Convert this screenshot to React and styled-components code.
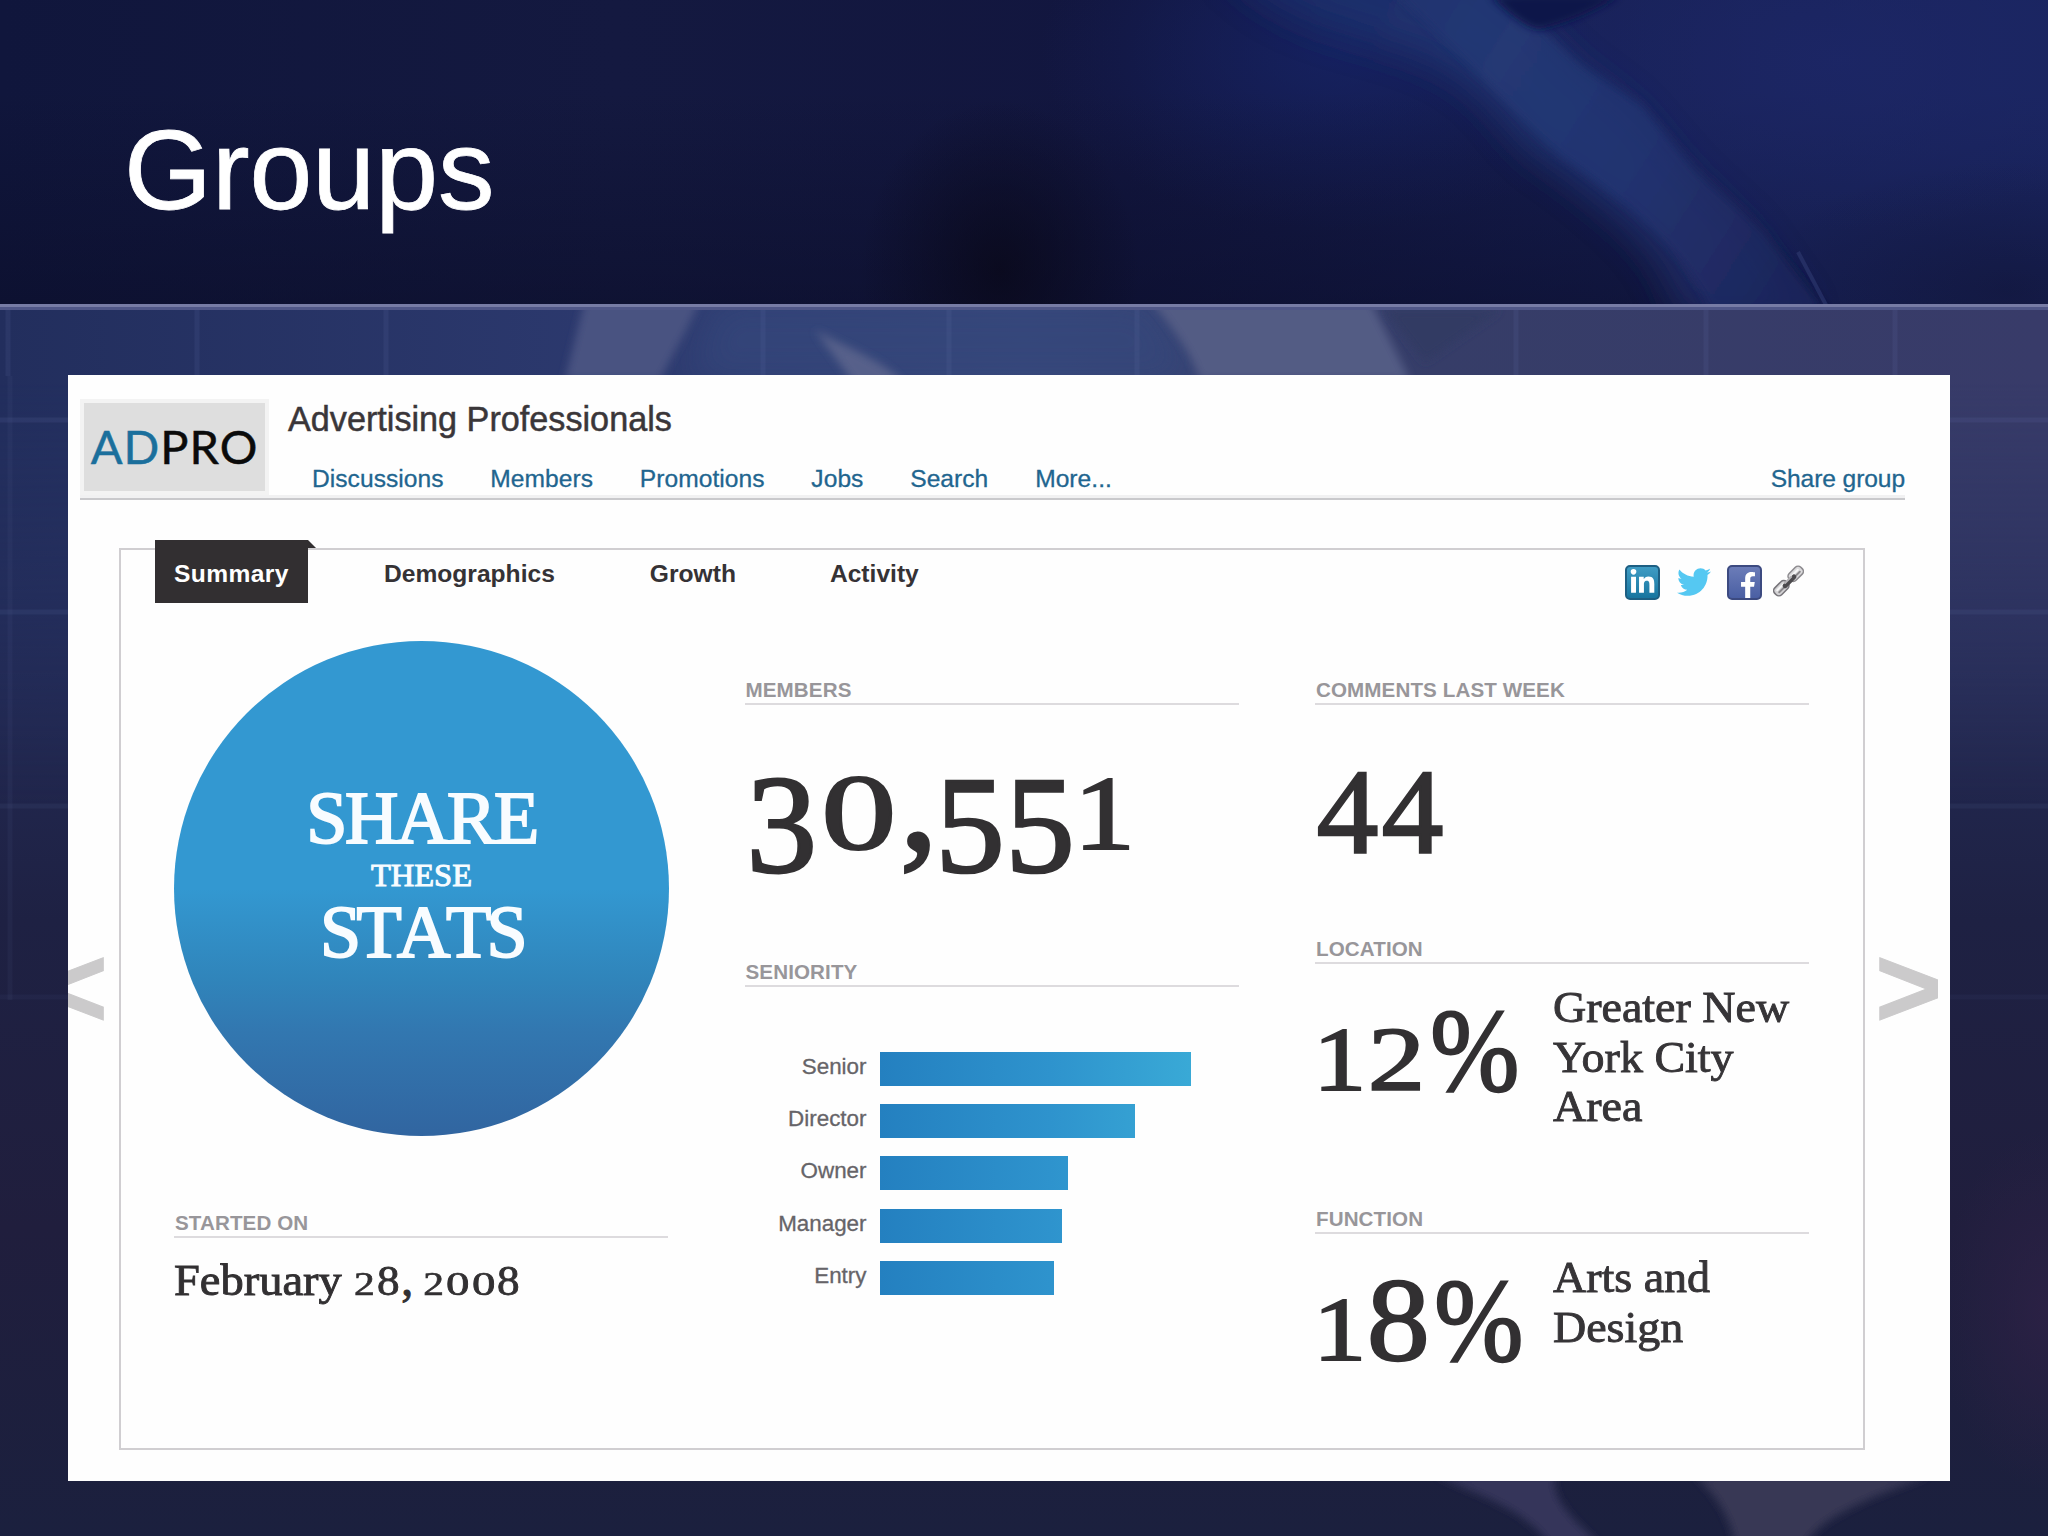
import React from 'react';
import styled, { createGlobalStyle } from 'styled-components';
import { FaFacebookF, FaLinkedinIn, FaTwitter } from 'react-icons/fa';

const sans = '"Liberation Sans", Arial, sans-serif';
const serif = '"Liberation Serif", Georgia, serif';

const GlobalStyle = createGlobalStyle`
    * {
        box-sizing: border-box;
    }
    body {
        margin: 0;
        font-family: ${sans};
    }
`;

const Slide = styled.div`
    position: relative;
    width: 2048px;
    height: 1536px;
    overflow: hidden;
    background-color: #1c2040;
`;

const Backdrop = styled.svg`
    position: absolute;
    top: 0;
    left: 0;
`;

const SlideContent = styled.div`
    position: relative;
    display: flex;
    flex-direction: column;
`;

const SlideHeader = styled.header`
    height: 375px;
    padding: 101px 0 0 124px;
`;

const Title = styled.h1`
    margin: 0;
    font-size: 113px;
    line-height: 138px;
    font-weight: 400;
    color: white;
    -webkit-text-stroke: 0.8px white;
`;

const Card = styled.main`
    width: 1882px;
    height: 1106px;
    margin-left: 68px;
    padding-top: 24px;
    overflow: hidden;
    background-color: #fefefe;
`;

const GroupHeader = styled.div`
    display: flex;
    width: 1825px;
    height: 101px;
    margin-left: 12px;
    border-bottom: 2px solid #c9c9cc;
    box-shadow: inset 0 -3px 0 #f1f1f2;
`;

const Logo = styled.div`
    width: 189px;
    height: 96px;
    display: flex;
    align-items: center;
    justify-content: center;
    padding-bottom: 2px;
    border: 4px solid #f3f3f3;
    background-color: #dedede;
    font-family: Lato, sans-serif;
    font-size: 47px;
    letter-spacing: 1px;
    color: #0b0b0b;
    -webkit-text-stroke: 0.5px currentColor;
`;

const LogoAccent = styled.span`
    color: #1b6f9c;
`;

const GroupInfo = styled.div`
    flex: 1;
    margin-left: 19px;
`;

const GroupName = styled.h2`
    margin: 0;
    font-size: 34.2px;
    line-height: 40px;
    font-weight: 400;
    color: #3a3639;
    -webkit-text-stroke: 0.5px #3a3639;
`;

const Nav = styled.nav`
    display: flex;
    gap: 46.8px;
    margin-top: 25px;
    padding-left: 24px;
`;

const NavLink = styled.a`
    font-size: 24.6px;
    line-height: 30px;
    letter-spacing: ${(props) => (props.$right ? '-0.1' : '0.03')}px;
    color: #21658f;
    margin-left: ${(props) => (props.$right ? 'auto' : '0')};
    -webkit-text-stroke: 0.3px #21658f;
`;

const Stage = styled.div`
    display: grid;
    grid-template-columns: 51px 1746px 85px;
    margin-top: 48px;
`;

const Arrow = styled.div`
    display: flex;
    justify-content: ${(props) => (props.$side === 'left' ? 'flex-end' : 'flex-start')};
    padding: ${(props) => (props.$side === 'left' ? '379px 11px 0 0' : '379px 0 0 10px')};
    overflow: hidden;
    font-size: 115px;
    line-height: 120px;
    font-weight: 700;
    color: #cbcacb;
    -webkit-text-stroke: 1px #cbcacb;
`;

const Panel = styled.section`
    height: 902px;
    border: 2px solid #d0ced1;
`;

const TabBar = styled.div`
    display: flex;
    height: 63px;
    margin-top: -10px;
    padding: 0 59px 0 34px;
`;

const Tab = styled.div`
    height: 63px;
    padding-top: 5px;
    font-size: 24.6px;
    line-height: 58px;
    font-weight: 700;
    color: #353235;
    margin-left: ${(props) => props.$gap}px;
`;

const ActiveTab = styled(Tab)`
    position: relative;
    width: 153px;
    padding-left: 19px;
    letter-spacing: 0.4px;
    background-color: #322f31;
    color: white;
    &::after {
        content: "";
        position: absolute;
        top: 0;
        left: 100%;
        border-bottom: 8px solid #322f31;
        border-right: 8px solid transparent;
    }
`;

const ShareIcons = styled.div`
    display: flex;
    align-items: flex-start;
    margin: 25px 0 0 auto;
`;

const Badge = styled.div`
    width: 35px;
    height: 35px;
    display: flex;
    align-items: center;
    justify-content: center;
    border: 2px solid ${(props) => props.$edge};
    border-radius: 5px;
    background: ${(props) => props.$fill};
    color: white;
    overflow: hidden;
`;

const LinkedInBadge = styled(Badge)`
    margin-right: 17px;
`;

const FacebookBadge = styled(Badge)`
    align-items: flex-end;
    padding-left: 7px;
    margin: 0 11px 0 16px;
`;

const Columns = styled.div`
    display: grid;
    grid-template-columns: 494px 494px 494px;
    column-gap: 76.5px;
    padding-left: 53px;
`;

const Column = styled.div`
    display: flex;
    flex-direction: column;
    padding-top: ${(props) => props.$top}px;
`;

const Section = styled.div`
    height: ${(props) => props.$height}px;
`;

const Label = styled.div`
    height: 26px;
    padding-left: 1px;
    border-bottom: 2px solid #dddbde;
    font-size: 20.6px;
    line-height: 22px;
    letter-spacing: 0.1px;
    font-weight: 700;
    color: #98969a;
`;

const Circle = styled.div`
    width: 495px;
    height: 495px;
    display: flex;
    flex-direction: column;
    align-items: center;
    padding-top: 137px;
    margin-bottom: 76px;
    border-radius: 50%;
    background: linear-gradient(#3398d1 0%, #3398d1 50%, #3085bb 68%, #3277b0 79%, #3165a0 100%);
    font-family: ${serif};
    color: #f8fcff;
`;

const CircleBig = styled.span`
    font-size: 74px;
    line-height: 80px;
    letter-spacing: ${(props) => props.$tracking}px;
    font-kerning: none;
    -webkit-text-stroke: 2px #f8fcff;
`;

const CircleSmall = styled.span`
    font-size: 32.5px;
    line-height: 34px;
    -webkit-text-stroke: 1px #f8fcff;
`;

const Figure = styled.div`
    display: flex;
    height: 1em;
    margin-top: ${(props) => props.$top}px;
    font-family: ${serif};
    font-size: ${(props) => props.$size}px;
    line-height: 1;
    color: #323032;
    -webkit-text-stroke: 0.02em #323032;
`;

const Word = styled.span`
    display: inline-block;
    width: ${(props) => props.$width}em;
    transform: scale(1.12, 1.046);
    transform-origin: 0 0.8375em;
    white-space: pre;
`;

const Glyph = styled.span`
    display: inline-flex;
    justify-content: center;
    width: ${(props) => props.$g.w}em;
    white-space: pre;
    transform-origin: 50% 0.8375em;
    transform: translate(${(props) => props.$g.dx || 0}em, ${(props) => props.$g.dy || 0}em)
        scale(${(props) => props.$g.sx}, ${(props) => props.$g.sy});
`;

const StatRow = styled.div`
    display: flex;
`;

const StatValue = styled.div`
    width: 238px;
`;

const StatText = styled.div`
    padding-top: 19px;
    font-family: ${serif};
    font-size: 44px;
    line-height: 49.5px;
    color: #363437;
    white-space: pre;
    transform: scaleX(1.045);
    transform-origin: left;
    -webkit-text-stroke: 0.9px #363437;
`;

const Bars = styled.div`
    display: flex;
    flex-direction: column;
    gap: 18.2px;
    margin-top: 65px;
`;

const BarRow = styled.div`
    display: flex;
    height: 34px;
`;

const BarLabel = styled.span`
    width: 122px;
    margin-right: 13px;
    text-align: right;
    font-size: 22.4px;
    line-height: 30px;
    color: #666468;
    -webkit-text-stroke: 0.3px #666468;
`;

const Bar = styled.div`
    height: 34px;
    background: linear-gradient(90deg, #2480c0 0, #2e93cd 170px, #39a9d6 310px);
`;

// old-style numerals: 0-2 sit at x-height, 3-5 hang below the baseline
const glyphs = {
    0: { w: 0.613, sx: 1.13, sy: 0.81 },
    1: { w: 0.429, sx: 0.93, sy: 0.79 },
    2: { w: 0.559, sx: 1, sy: 0.79 },
    3: { w: 0.551, sx: 1.06, sy: 1.05, dy: 0.175 },
    4: { w: 0.565, sx: 1.07, sy: 1.05, dy: 0.17 },
    5: { w: 0.528, sx: 1.04, sy: 1.03, dy: 0.17 },
    8: { w: 0.596, sx: 1.09, sy: 1.03 },
    '%': { w: 0.817, sx: 0.93, sy: 1.03, dx: -0.01 },
    ',': { w: 0.27, sx: 1.15, sy: 1.15, dx: 0.015 },
    ' ': { w: 0.241, sx: 1, sy: 1 },
};

const Numerals = ({ text }) =>
    text.split('').map((char, i) => (
        <Glyph key={i} $g={glyphs[char]}>{char}</Glyph>
    ));

const tabs = [
    { name: 'Demographics', gap: 76 },
    { name: 'Growth', gap: 95 },
    { name: 'Activity', gap: 94 },
];

const seniority = [
    { name: 'Senior', width: 311 },
    { name: 'Director', width: 255 },
    { name: 'Owner', width: 188 },
    { name: 'Manager', width: 182 },
    { name: 'Entry', width: 174 },
];

const stats = [
    { label: 'LOCATION', value: '12%', text: 'Greater New\nYork City\nArea' },
    { label: 'FUNCTION', value: '18%', text: 'Arts and\nDesign' },
];

const ChainIcon = () => (
    <svg width="31" height="32" viewBox="0 0 32 32" fill="none">
        <g transform="rotate(-45 16 16)" strokeLinecap="round">
            <rect x="-3" y="11" width="17" height="10" rx="4" fill="#d4d3d5" stroke="#77757a" strokeWidth="1.6" />
            <rect x="18" y="11" width="17" height="10" rx="4" fill="#dcdbdd" stroke="#8c8a8e" strokeWidth="1.6" />
            <path d="M1 14.5h9M22 14.5h9" stroke="#f6f6f6" strokeWidth="2" />
            <path d="M1 17.5h9M22 17.5h9" stroke="#8b898c" strokeWidth="2" />
            <path d="M10 17h13" stroke="#4c4a4d" strokeWidth="5" />
            <path d="M12 15h9" stroke="#b5b3b6" strokeWidth="2" />
        </g>
    </svg>
);

const SlideBackdrop = () => (
    <Backdrop width="2048" height="1536" viewBox="0 0 2048 1536">
        <defs>
            <linearGradient id="head" x1="0" x2="1" y1="0" y2="0">
                <stop offset="0" stopColor="#10163c" />
                <stop offset="0.3" stopColor="#141940" />
                <stop offset="0.55" stopColor="#12163f" />
                <stop offset="0.78" stopColor="#151d50" />
                <stop offset="1" stopColor="#192562" />
            </linearGradient>
            <linearGradient id="shade" x1="0" x2="0" y1="0" y2="1">
                <stop offset="0.3" stopColor="#0a0c26" stopOpacity="0" />
                <stop offset="1" stopColor="#0a0c26" stopOpacity="0.5" />
            </linearGradient>
            <linearGradient id="body" x1="0" x2="0" y1="0" y2="1">
                <stop offset="0" stopColor="#283262" />
                <stop offset="0.25" stopColor="#242c58" />
                <stop offset="0.5" stopColor="#1e2143" />
                <stop offset="0.75" stopColor="#201e3d" />
                <stop offset="1" stopColor="#1b203e" />
            </linearGradient>
            <linearGradient id="strip" x1="0" x2="1" y1="0" y2="0">
                <stop offset="0" stopColor="#222e5d" />
                <stop offset="0.3" stopColor="#2c396e" />
                <stop offset="0.5" stopColor="#37477a" />
                <stop offset="0.7" stopColor="#363d68" />
                <stop offset="1" stopColor="#383b69" />
            </linearGradient>
            <linearGradient id="fade" x1="0" x2="0" y1="0" y2="1">
                <stop offset="0.15" stopColor="white" />
                <stop offset="1" stopColor="black" />
            </linearGradient>
            <mask id="stripMask" maskUnits="userSpaceOnUse" x="0" y="305" width="2048" height="500">
                <rect y="305" width="2048" height="500" fill="url(#fade)" />
            </mask>
            <linearGradient id="swoosh" gradientUnits="userSpaceOnUse" x1="1300" y1="0" x2="1780" y2="305">
                <stop offset="0" stopColor="#1c2f6c" />
                <stop offset="0.35" stopColor="#253a76" />
                <stop offset="0.65" stopColor="#233472" />
                <stop offset="1" stopColor="#1e275e" />
            </linearGradient>
            <radialGradient id="navyGlow">
                <stop offset="0" stopColor="#17256a" stopOpacity="0.7" />
                <stop offset="1" stopColor="#17256a" stopOpacity="0" />
            </radialGradient>
            <radialGradient id="violetGlow">
                <stop offset="0" stopColor="#1d2768" stopOpacity="0.7" />
                <stop offset="1" stopColor="#1d2768" stopOpacity="0" />
            </radialGradient>
            <radialGradient id="blackGlow">
                <stop offset="0" stopColor="#090818" stopOpacity="0.75" />
                <stop offset="1" stopColor="#090818" stopOpacity="0" />
            </radialGradient>
            <radialGradient id="plumGlow">
                <stop offset="0" stopColor="#2c2145" stopOpacity="0.9" />
                <stop offset="1" stopColor="#2c2145" stopOpacity="0" />
            </radialGradient>
            <filter id="soft" x="-30%" y="-30%" width="160%" height="160%">
                <feGaussianBlur stdDeviation="4" />
            </filter>
            <filter id="softer" x="-30%" y="-30%" width="160%" height="160%">
                <feGaussianBlur stdDeviation="18" />
            </filter>
            <clipPath id="top"><rect width="2048" height="305" /></clipPath>
            <clipPath id="bottom"><rect y="308" width="2048" height="1228" /></clipPath>
        </defs>
        <g clipPath="url(#top)">
            <rect width="2048" height="305" fill="url(#head)" />
            <ellipse cx="1340" cy="50" rx="300" ry="180" fill="url(#navyGlow)" />
            <rect width="2048" height="305" fill="url(#shade)" />
            <path d="M1495 -10L1581 65L1642 105L1695 170L1762 230L1830 310H2060V-10Z" fill="#1a2761" opacity="0.5" filter="url(#soft)" />
            <ellipse cx="1840" cy="60" rx="330" ry="170" fill="url(#violetGlow)" />
            <ellipse cx="2010" cy="290" rx="260" ry="130" fill="url(#blackGlow)" opacity="0.35" />
            <ellipse cx="1000" cy="270" rx="140" ry="170" fill="url(#blackGlow)" />
            <path d="M1220 -40H1470L1570 65L1630 110L1685 175L1750 235L1810 320H1680C1670 250 1610 210 1560 170C1500 135 1510 100 1440 65C1370 30 1290 40 1220 -40Z" fill="url(#swoosh)" opacity="0.85" filter="url(#softer)" />
            <path d="M1380 -20H1488L1581 65L1642 105L1695 170L1762 230L1826 310H1710C1680 240 1620 200 1560 155C1510 110 1460 50 1380 -20Z" fill="url(#swoosh)" opacity="0.8" filter="url(#soft)" />
            <path d="M1490 -5Q1525 30 1540 29Q1580 20 1620 -5Z" fill="#10194a" filter="url(#soft)" />
            <path d="M1798 252L1826 305" stroke="#38457d" strokeWidth="4" opacity="0.45" />
        </g>
        <g clipPath="url(#bottom)">
            <rect y="305" width="2048" height="1231" fill="url(#body)" />
            <rect y="305" width="2048" height="500" fill="url(#strip)" mask="url(#stripMask)" />
            <path d="M715 300H1150L1195 380H690Z" fill="#36467c" opacity="0.7" filter="url(#softer)" />
            <path d="M585 300H700C690 325 675 350 660 380H565Z" fill="#485381" filter="url(#soft)" />
            <path d="M815 330C850 350 885 360 905 385H855Z" fill="#56618a" filter="url(#soft)" />
            <path d="M1150 300H1370L1410 380H1200C1190 350 1170 325 1150 300Z" fill="#535c84" filter="url(#soft)" />
            <path d="M1385 310H1500L1425 362Z" fill="#303b63" filter="url(#soft)" />
            <ellipse cx="2048" cy="1310" rx="110" ry="180" fill="url(#plumGlow)" />
            <path d="M1435 1475H1555C1550 1500 1575 1520 1600 1545H1550C1525 1510 1490 1500 1435 1475Z" fill="#35365a" filter="url(#soft)" />
            <path d="M1695 1475H1930C1880 1495 1820 1515 1805 1545H1735C1730 1515 1715 1495 1695 1475Z" fill="#373854" filter="url(#soft)" />
            <g stroke="#6572a8" strokeOpacity="0.14" strokeWidth="5">
                {[8, 197, 386, 763, 949, 1137, 1516, 1706, 1895].map((x) => (
                    <path key={x} d={`M${x} 308V376`} />
                ))}
                <path d="M10 376V1000" strokeOpacity="0.08" />
                {[420, 612, 806, 997].map((y, i) => (
                    <path key={y} d={`M0 ${y}H2048`} strokeOpacity={0.16 - i * 0.03} />
                ))}
            </g>
        </g>
        <rect y="304" width="2048" height="6" fill="#505788" />
        <rect y="304" width="2048" height="3" fill="#777ca5" />
    </Backdrop>
);

const App = () => {
    return (
        <Slide>
            <GlobalStyle />
            <SlideBackdrop />
            <SlideContent>
                <SlideHeader>
                    <Title>Groups</Title>
                </SlideHeader>
                <Card>
                    <GroupHeader>
                        <Logo><LogoAccent>AD</LogoAccent>PRO</Logo>
                        <GroupInfo>
                            <GroupName>Advertising Professionals</GroupName>
                            <Nav>
                                <NavLink>Discussions</NavLink>
                                <NavLink>Members</NavLink>
                                <NavLink>Promotions</NavLink>
                                <NavLink>Jobs</NavLink>
                                <NavLink>Search</NavLink>
                                <NavLink>More...</NavLink>
                                <NavLink $right>Share group</NavLink>
                            </Nav>
                        </GroupInfo>
                    </GroupHeader>
                    <Stage>
                        <Arrow $side="left">&lt;</Arrow>
                        <Panel>
                            <TabBar>
                                <ActiveTab $gap={0}>Summary</ActiveTab>
                                {tabs.map((tab) => (
                                    <Tab key={tab.name} $gap={tab.gap}>{tab.name}</Tab>
                                ))}
                                <ShareIcons>
                                    <LinkedInBadge $edge="#1d5f83" $fill="linear-gradient(#3f9cc4, #17759f)">
                                        <FaLinkedinIn size={27} />
                                    </LinkedInBadge>
                                    <FaTwitter size={34} color="#55c8f2" />
                                    <FacebookBadge $edge="#3c4a80" $fill="linear-gradient(#6b7cb8, #4a5fa3)">
                                        <FaFacebookF size={26} />
                                    </FacebookBadge>
                                    <ChainIcon />
                                </ShareIcons>
                            </TabBar>
                            <Columns>
                                <Column $top={38}>
                                    <Circle>
                                        <CircleBig $tracking={-2.4}>SHARE</CircleBig>
                                        <CircleSmall>THESE</CircleSmall>
                                        <CircleBig $tracking={-4.6}>STATS</CircleBig>
                                    </Circle>
                                    <Label>STARTED ON</Label>
                                    <Figure $size={41.5} $top={23}>
                                        <Word $width={4.07}>February</Word>
                                        <Numerals text=" 28, 2008" />
                                    </Figure>
                                </Column>
                                <Column $top={76}>
                                    <Section $height={282}>
                                        <Label>MEMBERS</Label>
                                        <Figure $size={133} $top={33}>
                                            <Numerals text="30,551" />
                                        </Figure>
                                    </Section>
                                    <Label>SENIORITY</Label>
                                    <Bars>
                                        {seniority.map((item) => (
                                            <BarRow key={item.name}>
                                                <BarLabel>{item.name}</BarLabel>
                                                <Bar style={{ width: item.width }} />
                                            </BarRow>
                                        ))}
                                    </Bars>
                                </Column>
                                <Column $top={76}>
                                    <Section $height={259}>
                                        <Label>COMMENTS LAST WEEK</Label>
                                        <Figure $size={115} $top={31}>
                                            <Numerals text="44" />
                                        </Figure>
                                    </Section>
                                    {stats.map((stat) => (
                                        <Section key={stat.label} $height={270}>
                                            <Label>{stat.label}</Label>
                                            <StatRow>
                                                <StatValue>
                                                    <Figure $size={115} $top={30}>
                                                        <Numerals text={stat.value} />
                                                    </Figure>
                                                </StatValue>
                                                <StatText>{stat.text}</StatText>
                                            </StatRow>
                                        </Section>
                                    ))}
                                </Column>
                            </Columns>
                        </Panel>
                        <Arrow $side="right">&gt;</Arrow>
                    </Stage>
                </Card>
            </SlideContent>
        </Slide>
    );
};

export default App;
